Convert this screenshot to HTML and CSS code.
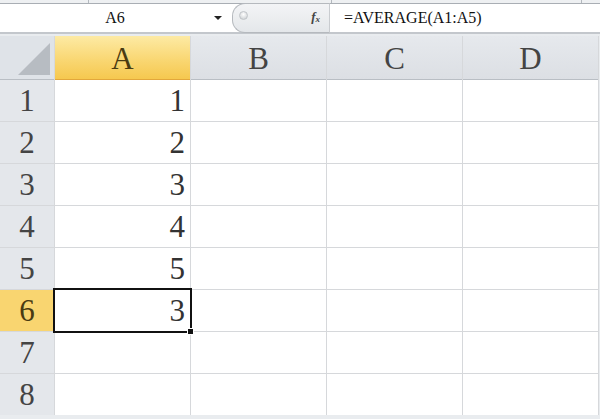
FILE: index.html
```html
<!DOCTYPE html>
<html lang="en">

<head>
  <meta charset="UTF-8" />
  <meta name="viewport" content="width=device-width, initial-scale=1.0" />
  <title>Sheet</title>
  <link rel="stylesheet" href="styles.css">
</head>

<body>
  <div class="ribbon">
    <span class="tick t1"></span>
    <span class="tick t2"></span>
    <span class="tick t3"></span>
  </div>
  <div class="bar">
    <div class="namebox">
      <span class="name">A6</span>
      <span class="arrow"></span>
    </div>
    <div class="fxbox">
      <span class="knob"></span>
      <span class="fx"><i>f</i><sub>x</sub></span>
    </div>
    <div class="formula">=AVERAGE(A1:A5)</div>
  </div>
  <div class="sheet">
    <div class="corner"><span class="tri"></span></div>
    <div class="colhead active">A</div>
    <div class="colhead">B</div>
    <div class="colhead">C</div>
    <div class="colhead">D</div>

    <div class="rowhead">1</div>
    <div class="cell">1</div><div class="cell"></div><div class="cell"></div><div class="cell"></div>
    <div class="rowhead">2</div>
    <div class="cell">2</div><div class="cell"></div><div class="cell"></div><div class="cell"></div>
    <div class="rowhead">3</div>
    <div class="cell">3</div><div class="cell"></div><div class="cell"></div><div class="cell"></div>
    <div class="rowhead">4</div>
    <div class="cell">4</div><div class="cell"></div><div class="cell"></div><div class="cell"></div>
    <div class="rowhead">5</div>
    <div class="cell">5</div><div class="cell"></div><div class="cell"></div><div class="cell"></div>
    <div class="rowhead active">6</div>
    <div class="cell selected">3<span class="handle"></span></div><div class="cell"></div><div class="cell"></div><div class="cell"></div>
    <div class="rowhead">7</div>
    <div class="cell"></div><div class="cell"></div><div class="cell"></div><div class="cell"></div>
    <div class="rowhead">8</div>
    <div class="cell"></div><div class="cell"></div><div class="cell"></div><div class="cell"></div>
  </div>
</body>

</html>
```

FILE: styles.css
```css
body {
  margin: 0;
  background-color: #e9ecef;
  font-family: "Liberation Serif", serif;
  color: #333;
  overflow: hidden;
}

.ribbon {
  position: relative;
  height: 3px;
  background-color: #eef0f2;
  border-bottom: 1px solid #a9aeb4;
}

.tick {
  position: absolute;
  top: 0;
  width: 1px;
  height: 3px;
  background-color: #b3b8be;
}

.t1 { left: 88px; }
.t2 { left: 331px; }
.t3 { left: 581px; }

.bar {
  display: flex;
  height: 28px;
  border-bottom: 2px solid #c3c7cc;
  margin-bottom: 2px;
  background-color: #fff;
}

.namebox {
  width: 232px;
  display: flex;
  align-items: center;
  font-size: 16px;
  color: #111;
}

.name {
  flex: 1;
  text-align: center;
  padding-left: 16px;
}

.arrow {
  width: 0;
  height: 0;
  border-left: 4px solid transparent;
  border-right: 4px solid transparent;
  border-top: 4px solid #222;
  margin-right: 10px;
}

.fxbox {
  position: relative;
  width: 98px;
  background: linear-gradient(#f3f4f6, #e4e7ea);
  border: 1px solid #b5b9be;
  border-right-color: #c9ccd0;
  border-radius: 13px 0 0 13px;
  margin-top: -1px;
  margin-bottom: -1px;
  box-sizing: border-box;
  display: flex;
  align-items: center;
  justify-content: flex-end;
}

.knob {
  position: absolute;
  left: 6px;
  top: 7px;
  width: 7px;
  height: 7px;
  border-radius: 50%;
  background: radial-gradient(circle at 50% 35%, #fff, #c6cace);
  border: 1px solid #c0c4c8;
}

.fx {
  font-size: 13px;
  font-weight: bold;
  color: #444;
  margin-right: 9px;
  margin-top: -2px;
}

.fx sub {
  font-size: 9px;
  font-style: italic;
  vertical-align: -1px;
}

.formula {
  flex: 1;
  display: flex;
  align-items: center;
  padding-left: 14px;
  font-size: 16px;
  color: #111;
}

.sheet {
  display: grid;
  grid-template-columns: 54px repeat(4, 135px);
  grid-template-rows: 43px repeat(8, 41px);
  gap: 1px;
  background-color: #d6d8db;
  width: 599px;
}

.corner {
  position: relative;
  background-color: #dfe3e8;
  border-bottom: 1px solid #b9bec4;
  margin-bottom: -1px;
}

.tri {
  position: absolute;
  right: 4px;
  bottom: 4px;
  width: 0;
  height: 0;
  border-left: 32px solid transparent;
  border-bottom: 32px solid #b7bcc2;
}

.colhead {
  background: linear-gradient(#e6e9ed, #dcdfe4);
  display: flex;
  align-items: center;
  justify-content: center;
  padding-top: 3px;
  font-size: 31px;
  color: #444;
  border-bottom: 1px solid #b9bec4;
  margin-bottom: -1px;
}

.colhead.active {
  background: linear-gradient(#fdeaa4, #f9d773 55%, #f6c84f);
  border-bottom-color: #e3a73b;
  color: #4a3b12;
}

.rowhead {
  background-color: #e4e7eb;
  display: flex;
  align-items: flex-end;
  justify-content: center;
  padding-bottom: 5px;
  font-size: 31px;
  line-height: 1;
  color: #444;
}

.rowhead.active {
  background-color: #f9d570;
  color: #4a3b12;
}

.cell {
  position: relative;
  background-color: #fff;
  display: flex;
  align-items: flex-end;
  justify-content: flex-end;
  padding: 0 5px 5px 0;
  font-size: 31px;
  line-height: 1;
  color: #333;
}

.cell.selected {
  outline: 2px solid #111;
  outline-offset: 0;
  z-index: 1;
}

.handle {
  position: absolute;
  right: -4px;
  bottom: -4px;
  width: 5px;
  height: 5px;
  background-color: #111;
  border: 1px solid #fff;
}
```
